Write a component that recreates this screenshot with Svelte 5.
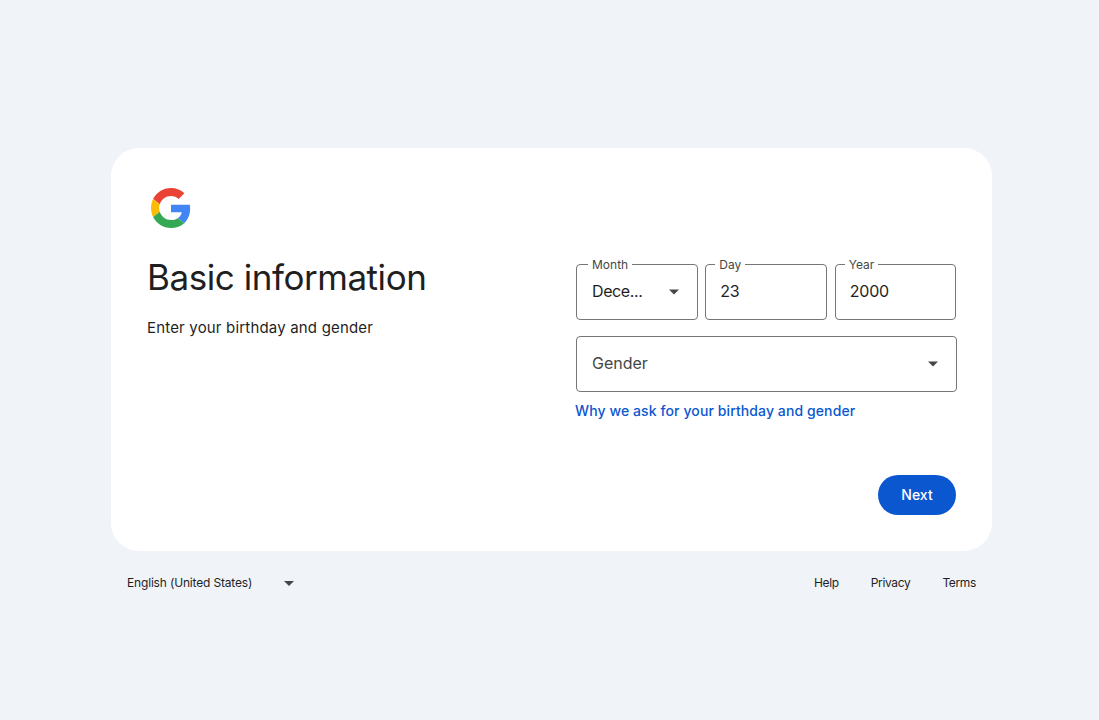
<script>
	const footerLinks = ['Help', 'Privacy', 'Terms'];
</script>

{#snippet arrow()}
	<svg class="arrow" width="12" height="6" viewBox="0 0 12 6"><path d="M1 0.5h10L6 5.5z" fill="#444746" /></svg>
{/snippet}

<div class="page">
	<main class="card">
		<svg class="logo" width="40" height="40" viewBox="0 0 48 48">
			<path fill="#EA4335" d="M24 9.5c3.54 0 6.71 1.22 9.21 3.6l6.85-6.85C35.9 2.38 30.47 0 24 0 14.62 0 6.51 5.38 2.56 13.22l7.98 6.19C12.43 13.72 17.74 9.5 24 9.5z" />
			<path fill="#4285F4" d="M46.98 24.55c0-1.57-.15-3.09-.38-4.55H24v9.02h12.94c-.58 2.96-2.26 5.48-4.78 7.18l7.73 6c4.51-4.18 7.09-10.36 7.09-17.65z" />
			<path fill="#FBBC05" d="M10.53 28.59c-.48-1.45-.76-2.99-.76-4.59s.27-3.14.76-4.59l-7.98-6.19C.92 16.46 0 20.12 0 24c0 3.88.92 7.54 2.56 10.78l7.97-6.19z" />
			<path fill="#34A853" d="M24 48c6.48 0 11.93-2.13 15.89-5.81l-7.73-6c-2.15 1.45-4.92 2.3-8.16 2.3-6.26 0-11.57-4.22-13.47-9.91l-7.98 6.19C6.51 42.62 14.62 48 24 48z" />
		</svg>

		<div class="columns">
			<div class="intro">
				<h1>Basic information</h1>
				<p>Enter your birthday and gender</p>
			</div>

			<form class="fields">
				<div class="birthday">
					<div class="field">
						<span class="label">Month</span>
						<span class="value month">Dece...</span>
						{@render arrow()}
					</div>
					<div class="field">
						<span class="label tight">Day</span>
						<span class="value number">23</span>
					</div>
					<div class="field">
						<span class="label tight">Year</span>
						<span class="value number">2000</span>
					</div>
				</div>
				<div class="field gender">
					<span class="placeholder">Gender</span>
					{@render arrow()}
				</div>
				<a class="why" href="#why">Why we ask for your birthday and gender</a>
			</form>
		</div>

		<div class="actions">
			<button type="button" class="next">Next</button>
		</div>
	</main>

	<footer>
		<div class="language">
			<span>English (United States)</span>
			<svg width="10" height="5" viewBox="0 0 10 5"><path d="M0 0h10L5 5z" fill="#444746" /></svg>
		</div>
		<nav>
			{#each footerLinks as link}
				<a href="#{link}">{link}</a>
			{/each}
		</nav>
	</footer>
</div>

<style>
	:global(body) {
		background: #f0f4f9;
		font-family: Inter, "Liberation Sans", sans-serif;
		color: #1f1f1f;
	}
	.page {
		width: 881px;
		margin-left: 111px;
		padding-top: 148px;
		height: 572px;
	}
	.card {
		box-sizing: border-box;
		height: 403px;
		background: #fff;
		border-radius: 28px;
		padding: 40px 36px 36px;
		display: flex;
		flex-direction: column;
	}
	.logo {
		display: block;
		margin-left: 4px;
	}
	.columns {
		display: flex;
		justify-content: space-between;
		margin-top: 36px;
	}
	h1 {
		margin: -11px 0 0;
		font-size: 35px;
		font-weight: 400;
		line-height: 48px;
		letter-spacing: -0.45px;
		color: #1f1f1f;
	}
	.intro p {
		margin: 15px 0 0;
		font-size: 15px;
		line-height: 24px;
		letter-spacing: 0.18px;
		color: #1f1f1f;
	}
	.fields {
		width: 381px;
		margin-right: -1px;
	}
	.birthday {
		display: grid;
		grid-template-columns: 121.75px 122px 121px;
		column-gap: 7.5px;
	}
	.field {
		position: relative;
		box-sizing: border-box;
		height: 56px;
		border: 1px solid #747775;
		border-radius: 4px;
		display: flex;
		align-items: center;
		justify-content: space-between;
		padding: 0 17px 0 15px;
	}
	.label {
		position: absolute;
		top: -7px;
		left: 11px;
		padding: 0 4px;
		background: #fff;
		font-size: 12px;
		line-height: 14px;
		color: #444746;
	}
	.label.tight {
		left: 9px;
	}
	.value {
		margin-bottom: 2px;
		font-size: 16px;
		color: #1f1f1f;
	}
	.value.month {
		letter-spacing: -0.4px;
	}
	.value.number {
		margin-left: -1px;
		letter-spacing: -0.2px;
	}
	.gender {
		margin-top: 16px;
	}
	.placeholder {
		margin-bottom: 2px;
		font-size: 16px;
		color: #444746;
	}
	.arrow {
		display: block;
	}
	.why {
		display: block;
		margin-top: 11px;
		margin-left: -1px;
		font-size: 14px;
		font-weight: 500;
		line-height: 16px;
		letter-spacing: 0.1px;
		color: #0b57d0;
		text-decoration: none;
	}
	.actions {
		margin-top: auto;
		display: flex;
		justify-content: flex-end;
	}
	.next {
		width: 78px;
		height: 40px;
		padding: 0 0 2px;
		border: none;
		border-radius: 20px;
		background: #0b57d0;
		color: #fff;
		font-family: inherit;
		font-size: 14px;
		font-weight: 500;
	}
	footer {
		display: flex;
		justify-content: space-between;
		align-items: center;
		margin-top: 24px;
		padding: 0 16px;
		font-size: 12px;
		line-height: 16px;
		letter-spacing: -0.17px;
		color: #1f1f1f;
	}
	.language {
		display: flex;
		align-items: center;
		gap: 32px;
	}
	nav {
		display: flex;
		gap: 32px;
		letter-spacing: -0.35px;
	}
	nav a {
		color: inherit;
		text-decoration: none;
	}
</style>
